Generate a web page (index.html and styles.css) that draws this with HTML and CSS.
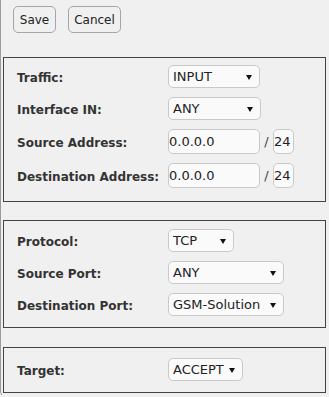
FILE: index.html
```html
<!DOCTYPE html>
<html>
<head>
<meta charset="utf-8">
<link rel="stylesheet" href="styles.css">
</head>
<body>
<div class="panel">
  <div class="toolbar">
    <button class="btn btn-save">Save</button>
    <button class="btn btn-cancel">Cancel</button>
  </div>

  <fieldset class="group group-1">
    <div class="row">
      <label class="lbl">Traffic:</label>
      <span class="sel"><select class="w-traffic"><option>INPUT</option><option>OUTPUT</option><option>FORWARD</option></select></span>
    </div>
    <div class="row">
      <label class="lbl">Interface IN:</label>
      <span class="sel"><select class="w-iface"><option>ANY</option></select></span>
    </div>
    <div class="row">
      <label class="lbl">Source Address:</label>
      <input class="addr" type="text" value="0.0.0.0"><span class="slash">/</span><input class="mask" type="text" value="24">
    </div>
    <div class="row">
      <label class="lbl">Destination Address:</label>
      <input class="addr" type="text" value="0.0.0.0"><span class="slash">/</span><input class="mask" type="text" value="24">
    </div>
  </fieldset>

  <fieldset class="group group-2">
    <div class="row">
      <label class="lbl">Protocol:</label>
      <span class="sel"><select class="w-proto"><option>TCP</option><option>UDP</option></select></span>
    </div>
    <div class="row">
      <label class="lbl">Source Port:</label>
      <span class="sel"><select class="w-port"><option>ANY</option></select></span>
    </div>
    <div class="row">
      <label class="lbl">Destination Port:</label>
      <span class="sel"><select class="w-port"><option>GSM-Solution</option></select></span>
    </div>
  </fieldset>

  <fieldset class="group group-3">
    <div class="row">
      <label class="lbl">Target:</label>
      <span class="sel"><select class="w-target"><option>ACCEPT</option><option>DROP</option></select></span>
    </div>
  </fieldset>
</div>
</body>
</html>
```

FILE: styles.css
```css
html, body {
  margin: 0;
  padding: 0;
  background: #f0f0f0;
  font-family: "DejaVu Sans", Verdana, sans-serif;
  color: #333;
}

.panel {
  border-left: 1px solid #9a9a9a;
  border-bottom: 1px solid transparent;
  border-bottom-left-radius: 6px;
  padding: 6px 3px 3px 2px;
}

.toolbar {
  display: flex;
  gap: 12px;
  padding-left: 10px;
}

.btn {
  height: 27px;
  box-sizing: border-box;
  padding: 0;
  border: 1px solid #a6a6a6;
  border-radius: 5px;
  background: #f0f0f0;
  color: #222;
  font-family: "DejaVu Sans", Verdana, sans-serif;
  font-size: 12px;
}
.btn-save { width: 43px; }
.btn-cancel { width: 53px; }

.group {
  margin: 0;
  min-width: 0;
  border: 1px solid #444;
  padding: 8px 0 11px 13px;
  display: flex;
  flex-direction: column;
  gap: 9px;
}
.group-1 { margin-top: 24px; padding-top: 7px; padding-bottom: 13px; }
.group-2 { margin-top: 18px; }
.group-3 { margin-top: 19px; padding-top: 10px; }

.row {
  display: flex;
  align-items: center;
}

.lbl {
  width: 151px;
  flex: none;
  font-weight: bold;
  font-size: 12px;
  color: #333;
  padding-top: 2px;
}

.sel {
  position: relative;
  display: inline-block;
}
.sel::after {
  content: "";
  position: absolute;
  right: 8px;
  top: 50%;
  margin-top: -2px;
  border-left: 3px solid transparent;
  border-right: 3px solid transparent;
  border-top: 5px solid #111;
  pointer-events: none;
}
select {
  -webkit-appearance: none;
  appearance: none;
  display: block;
  height: 23px;
  box-sizing: border-box;
  margin: 0;
  border: 1px solid #c9c9c9;
  border-radius: 5px;
  background: #fafafa;
  color: #222;
  font-family: "DejaVu Sans", Verdana, sans-serif;
  font-size: 13px;
  padding: 0 0 0 4px;
}
.w-traffic { width: 92px; }
.w-iface { width: 93px; }
.w-proto { width: 66px; }
.w-port { width: 116px; }
.w-target { width: 75px; }

input {
  height: 25px;
  box-sizing: border-box;
  margin: 0;
  border: 1px solid #c9c9c9;
  border-radius: 5px;
  background: #fafafa;
  color: #222;
  font-family: "DejaVu Sans", Verdana, sans-serif;
  font-size: 13px;
  padding: 0;
}
.addr { width: 92px; }
.mask { width: 21px; }
.slash {
  width: 13px;
  text-align: center;
  color: #444;
  font-size: 13px;
}
```
